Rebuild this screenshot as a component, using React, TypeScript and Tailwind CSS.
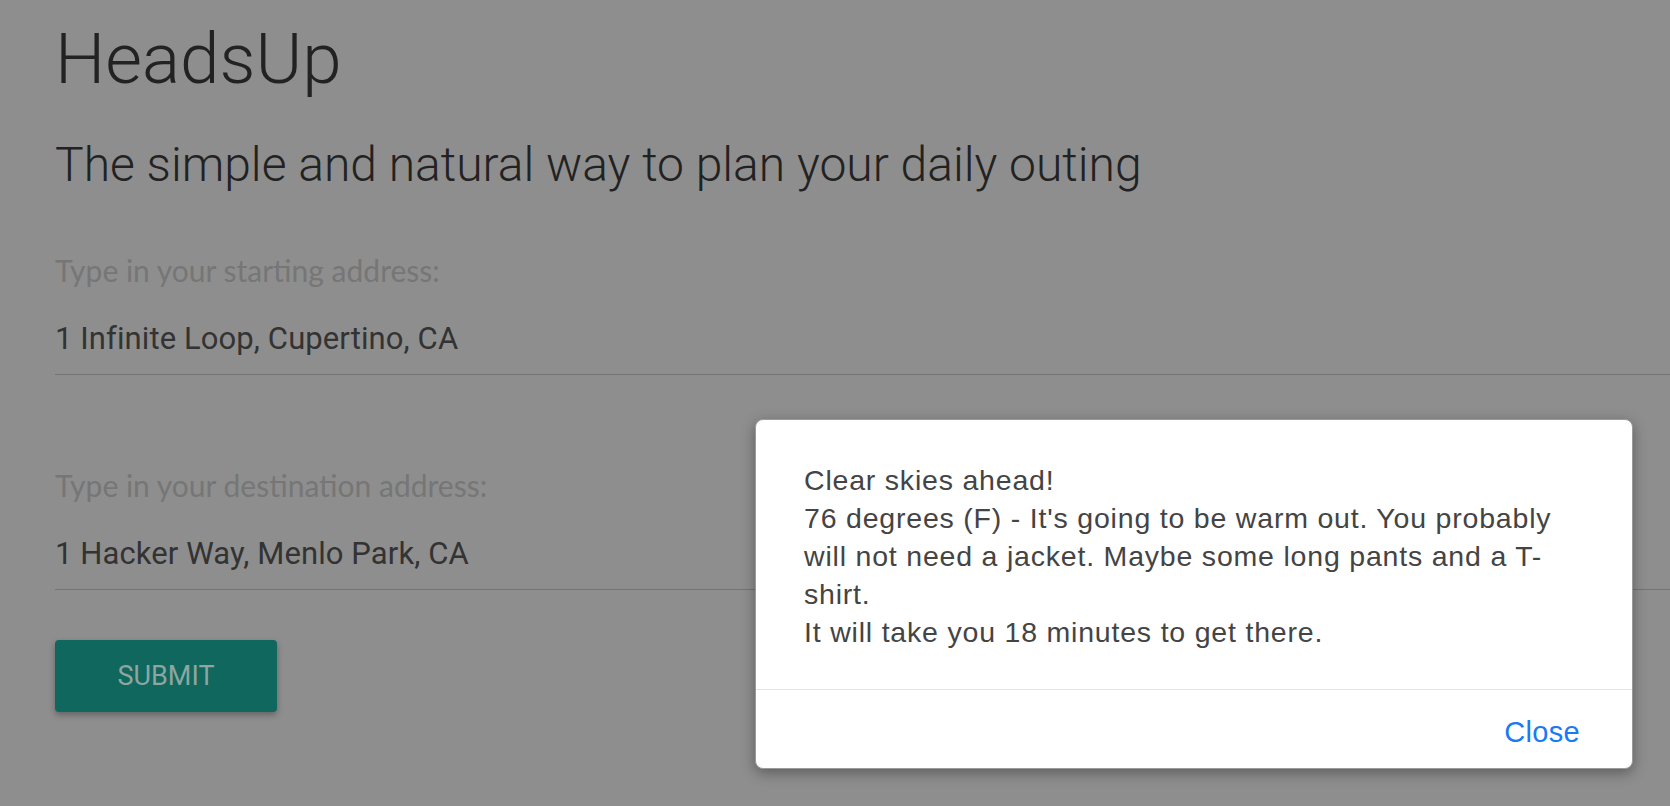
import React from "react";

export default function App() {
  return (
    <div className="relative h-[806px] w-full overflow-hidden bg-[#8e8e8e] font-['Roboto',sans-serif]">
      <main className="pl-[55px] pt-[19px]">
        <h1 className="text-[71px] font-light leading-[80px] text-[#222222]">HeadsUp</h1>
        <h2 className="mt-[38px] text-[48px] font-light leading-[56px] text-[#222222]">
          The simple and natural way to plan your daily outing
        </h2>

        <form className="mt-[59px]">
          <div>
            <label className="block font-['Lato',sans-serif] text-[30px] font-normal leading-[36px] text-[#767676]">
              Type in your starting address:
            </label>
            <div className="mt-[31px] border-b border-[#737373] pb-[15px] text-[31px] leading-[40px] tracking-[0.1px] text-[#333333]">
              1 Infinite Loop, Cupertino, CA
            </div>
          </div>
          <div className="mt-[92px]">
            <label className="block font-['Lato',sans-serif] text-[30px] font-normal leading-[36px] text-[#767676]">
              Type in your destination address:
            </label>
            <div className="mt-[31px] border-b border-[#737373] pb-[15px] text-[31px] leading-[40px] tracking-[0.1px] text-[#333333]">
              1 Hacker Way, Menlo Park, CA
            </div>
          </div>
          <button
            type="button"
            className="mt-[50px] h-[72px] w-[222px] rounded-[4px] bg-[#10675e] text-[27px] uppercase leading-[72px] text-[#8ea5a0] shadow-[0_3px_6px_rgba(0,0,0,0.3)]"
          >
            Submit
          </button>
        </form>
      </main>

      <div className="absolute left-[755px] top-[419px] w-[878px] rounded-[8px] border border-[#9a9a9a] bg-white shadow-[0_4px_14px_rgba(0,0,0,0.35)] font-['Liberation_Sans',Arial,sans-serif]">
        <div className="pb-[38px] pl-[48px] pr-[48px] pt-[41px] text-[28.5px] leading-[38px] tracking-[0.8px] text-[#444444]">
          <div>Clear skies ahead!</div>
          <div>
            76 degrees (F) - It's going to be warm out. You probably will not need a jacket. Maybe some long pants and a T-shirt.
          </div>
          <div>It will take you 18 minutes to get there.</div>
        </div>
        <div className="flex justify-end border-t border-[#e3e3e3] pb-[17px] pr-[52px] pt-[23px]">
          <button type="button" className="text-[29px] leading-[38px] tracking-[0.3px] text-[#1a7af5]">
            Close
          </button>
        </div>
      </div>
    </div>
  );
}
